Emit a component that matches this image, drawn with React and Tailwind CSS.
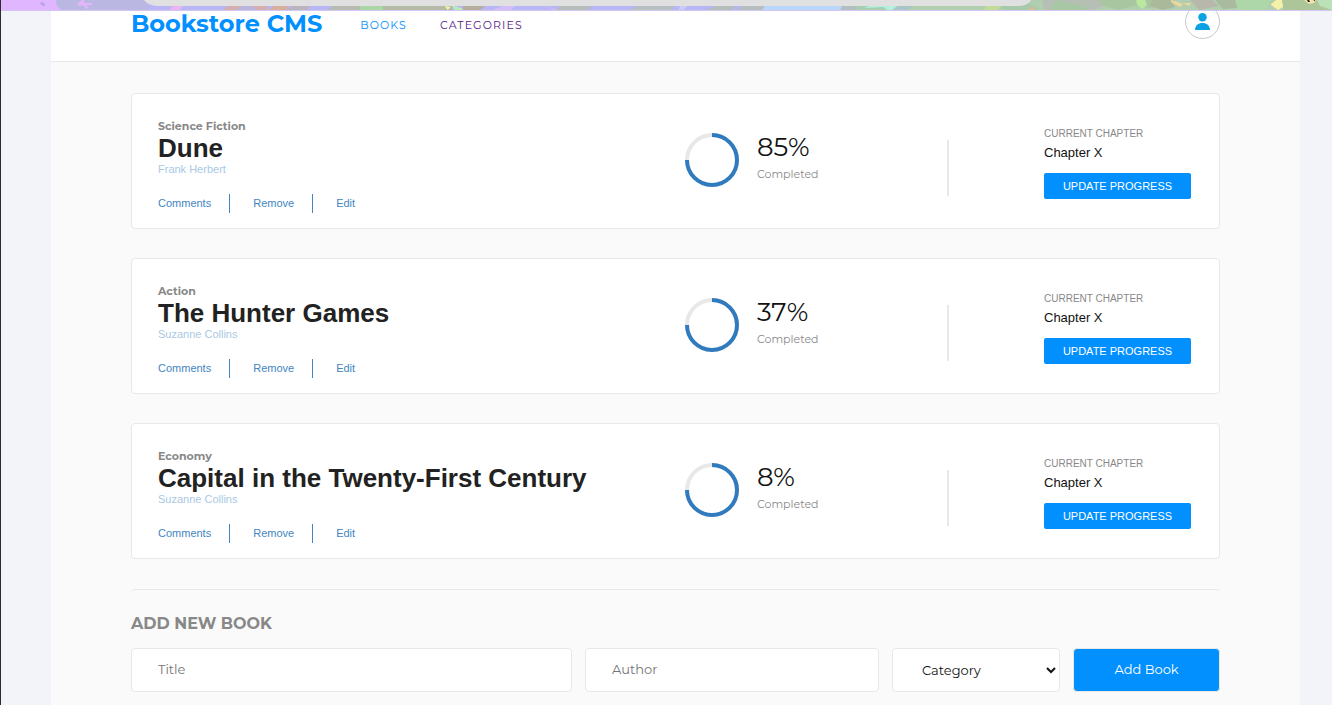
import React from 'react';

const books = [
  { category: 'Science Fiction', title: 'Dune', author: 'Frank Herbert', percent: 85 },
  { category: 'Action', title: 'The Hunter Games', author: 'Suzanne Collins', percent: 37 },
  { category: 'Economy', title: 'Capital in the Twenty-First Century', author: 'Suzanne Collins', percent: 8 },
];

function TopStrip() {
  return (
    <div className="absolute inset-x-0 top-0 z-10 h-[11px] overflow-hidden border-b border-[#d3c6f2]" aria-hidden="true">
      <svg className="block h-[10px] w-full" viewBox="0 0 1332 10" preserveAspectRatio="none">
        <rect width="1332" height="10" fill="#b9b6f6" />
        <rect width="60" height="10" fill="#dfb6ff" />
        <path d="M55 0H148V10H62Q55 8 55 0Z" fill="#bab8e2" />
        <path d="M39 3q2-2 4 0t1 3q-3 1-5-3Z" fill="#bda5e2" />
        <path d="M76 4l5-4h2v3h8v2h-6l3 3-2 1-4-4-3 1Z" fill="#e5b4fc" />
        <path d="M168 10l6-6h10l-5 6Z" fill="#e8b4f6" />
        <path d="M222 10l6-5h40l-2 5Z" fill="#d5aeb0" />
        <path d="M236 10l5-4h10l5 4Z" fill="#bab5df" />
        <path d="M268 10l6-5h14l-3 5Z" fill="#d6b09c" />
        <path d="M285 10l7-5h18l-4 5Z" fill="#bbb3bd" />
        <path d="M333 5h29v5h-35Z" fill="#b7bbb2" />
        <path d="M360 5h25l-3 5h-23Z" fill="#a9d7a6" />
        <path d="M382 5h70v5h-70Z" fill="#b4bca7" />
        <path d="M444 6l6 1-3 3Z" fill="#f8f5a0" />
        <path d="M451 5l15 5h-12Z" fill="#b4edbb" />
        <path d="M462 5h23l-5 5h-18Z" fill="#b5ad9d" />
        <path d="M492 10l12-5h12l-6 5Z" fill="#d2bff8" />
        <path d="M541 5l16 5h-2l-14-5Z" fill="#efc1f5" />
        <path d="M560 5h32l-4 5h-32Z" fill="#b7bdbb" />
        <path d="M628 10l12-5h36l-6 5Z" fill="#b8bfc1" />
        <path d="M680 5h8l-5 5h-5Z" fill="#c8cef5" />
        <path d="M706 10q14-7 29-3l-4 3Z" fill="#b6beba" />
        <path d="M742 5h23v5h-28Z" fill="#b6bec0" />
        <path d="M765 5h77l7 5h-87Z" fill="#b9d7fb" />
        <path d="M842 5h30v5h-32Z" fill="#b4bdc0" />
        <path d="M858 5h40v5h-44Z" fill="#a9ceb2" />
        <path d="M864 8l7-3h27l-2 5h-9l-4-3Z" fill="#b4f0df" />
        <path d="M891 0H1332V10H907Z" fill="#b1ceb0" />
        <path d="M898 5h14l-4 5h-16Z" fill="#a9c5c8" />
        <path d="M986 5h16l-5 5h-13Z" fill="#c2dc95" />
        <path d="M1002 5l23-3 16 8h-40Z" fill="#a8caac" />
        <path d="M1028 10l4-4 3 4Z" fill="#d9bd8e" />
        <path d="M1042 0h57l9 5-16 5h-48Z" fill="#b5bfb3" />
        <path d="M1056 0l28 6 4 4h-38Z" fill="#a8c7a4" />
        <path d="M1098 0h57l-2 8-20-2-15 4-13-4Z" fill="#a8c7a0" />
        <path d="M1136 0h9l2 5-5 4-5-4Z" fill="#b9e89e" />
        <path d="M1152 0h18l5 7-13 3-12-4Z" fill="#a9b999" />
        <path d="M1171 0l12 4-3 3-9-5ZM1183 3l8 0-2 3Z" fill="#f2d599" />
        <path d="M1190 0h22l7 6-20 4Z" fill="#b7b8ab" />
        <path d="M1215 0h25l8 7-25 2Z" fill="#aaba9e" />
        <path d="M1235 0h36l-5 10h-28Z" fill="#add7a8" />
        <path d="M1271 4l5-4h6l1 7-5 3-7-5Z" fill="#f6f0a8" />
        <path d="M1282 0h35l15 10h-48Z" fill="#acc599" />
        <path d="M1304 0h12l-2 3-5 1Z" fill="#f5e2ae" />
        <path d="M1307 0h2l1 2h-2ZM1313 0h2v1Z" fill="#202020" />
        <path d="M1317 0h15v10l-12-4Z" fill="#bbe1b6" />
        <path d="M143 0H1031Q1027 6 1018 6H158Q148 6 143 0Z" fill="#e0e0e0" />
      </svg>
    </div>
  );
}

function Header() {
  return (
    <header className="h-[62px] border-b border-[#e8e8e8] bg-white px-20 pt-1">
      <div className="flex h-[35px] items-center">
        <h1 className="pt-1 text-2xl font-bold text-[#0290ff]">Bookstore CMS</h1>
        <nav className="ml-[38px] flex gap-[33px] pt-1.5 text-[11px] leading-4 tracking-widest">
          <a href="#books" className="text-[#0290ff]">BOOKS</a>
          <a href="#categories" className="text-[#551a8b]">CATEGORIES</a>
        </nav>
        <button type="button" aria-label="Account" className="ml-auto flex size-[35px] items-center justify-center rounded-full border border-[#c8c8c8] bg-white">
          <svg className="size-[17px]" viewBox="0 0 17 17" fill="#0ba1e2">
            <circle cx="8.5" cy="4.2" r="4.2" />
            <path d="M1 17C1 12.5 4.5 10 8.5 10S16 12.5 16 17Z" />
          </svg>
        </button>
      </div>
    </header>
  );
}

function BookCard({ book }) {
  return (
    <li className="flex items-start rounded border border-[#e8e8e8] bg-white pr-7 pl-[26px]">
      <div className="min-w-0 flex-1 pt-6 pb-[15px]">
        <p className="text-[11px] leading-4 font-bold text-[#888888]">{book.category}</p>
        <h2 className="font-['Liberation_Sans',Arial,sans-serif] text-[26px] leading-7 font-bold text-[#222222]">{book.title}</h2>
        <p className="font-['Liberation_Sans',Arial,sans-serif] text-[11px] leading-[14px] text-[#a9c8e4]">{book.author}</p>
        <div className="mt-[18px] flex h-[19px] font-['Liberation_Sans',Arial,sans-serif] text-[11px] leading-[19px] text-[#4386bf]">
          <button type="button" className="border-r border-[#4386bf] pr-[18px]">Comments</button>
          <button type="button" className="border-r border-[#4386bf] pr-[18px] pl-[23px]">Remove</button>
          <button type="button" className="pl-[23px]">Edit</button>
        </div>
      </div>
      <div className="flex w-[262px] shrink-0 gap-[18px] pt-[39px]">
        <svg className="size-[54px]" viewBox="0 0 54 54" fill="none" strokeWidth="4">
          <circle cx="27" cy="27" r="25" stroke="#e8e8e8" />
          <path d="M27 2A25 25 0 1 1 2 27" stroke="#307bbe" />
        </svg>
        <div>
          <p className="text-[26px] leading-7 text-[#121212]">{book.percent}%</p>
          <p className="mt-[5px] text-[11px] leading-4 text-[#888888]">Completed</p>
        </div>
      </div>
      <div className="mt-[46px] h-14 w-0.5 shrink-0 bg-[#e8e8e8]" />
      <div className="ml-[95px] w-[147px] shrink-0 pt-[33px] font-['Liberation_Sans',Arial,sans-serif]">
        <p className="text-[10px] leading-[14px] text-[#888888]">CURRENT CHAPTER</p>
        <p className="mt-1 text-[13px] leading-4 text-[#121212]">Chapter X</p>
        <button type="button" className="mt-3 block h-[26px] w-full rounded-xs bg-[#0290ff] text-[11px] text-white">UPDATE PROGRESS</button>
      </div>
    </li>
  );
}

function AddBook() {
  return (
    <section className="mt-[30px] rounded border-t border-[#e8e8e8] pt-5 pb-10">
      <h2 className="text-base leading-7 font-bold text-[#888888]">ADD NEW BOOK</h2>
      <form className="mt-2.5 grid h-11 grid-cols-[441fr_294fr_168fr_147fr] gap-[13px] text-[13px]" onSubmit={(e) => e.preventDefault()}>
        <input aria-label="Title" placeholder="Title" className="min-w-0 rounded border border-[#e8e8e8] bg-white px-[26px] placeholder:text-[#757575]" />
        <input aria-label="Author" placeholder="Author" className="min-w-0 rounded border border-[#e8e8e8] bg-white px-[26px] placeholder:text-[#757575]" />
        <select aria-label="Category" className="min-w-0 rounded border border-[#e8e8e8] bg-white pl-[25px] text-[#121212]">
          <option>Category</option>
          <option>Action</option>
          <option>Economy</option>
          <option>Science Fiction</option>
        </select>
        <button type="submit" className="rounded border border-[#e8e8e8] bg-[#0290ff] text-white">Add Book</button>
      </form>
    </section>
  );
}

export default function App() {
  return (
    <div className="relative min-h-screen border-l border-[#2c2c2e] bg-[#f3f4f9] pr-8 pl-[50px] font-[Montserrat,Inter,sans-serif]">
      <TopStrip />
      <div className="min-h-screen bg-[#fafafa]">
        <Header />
        <main className="px-20 pt-[31px]">
          <ul className="flex flex-col gap-[29px]">
            {books.map((book) => <BookCard key={book.title} book={book} />)}
          </ul>
          <AddBook />
        </main>
      </div>
    </div>
  );
}
